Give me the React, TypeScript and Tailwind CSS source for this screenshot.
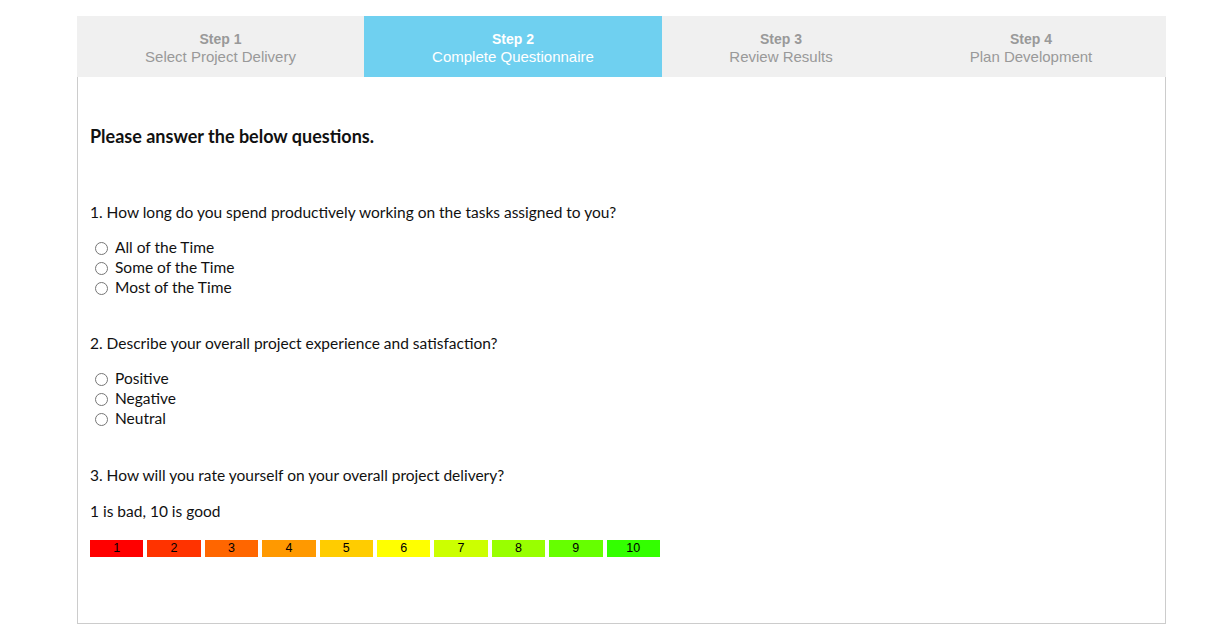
import React, { useState } from 'react';

// Wizard steps across the top
const steps = [
  { n: 1, label: 'Select Project Delivery', w: 'w-[287px]' },
  { n: 2, label: 'Complete Questionnaire', w: 'w-[298px]' },
  { n: 3, label: 'Review Results', w: 'w-[238px]' },
  { n: 4, label: 'Plan Development', w: 'w-[266px] pr-[4px]' },
];

const questions = [
  {
    q: '1. How long do you spend productively working on the tasks assigned to you?',
    options: ['All of the Time', 'Some of the Time', 'Most of the Time'],
  },
  {
    q: '2. Describe your overall project experience and satisfaction?',
    options: ['Positive', 'Negative', 'Neutral'],
  },
];

const ratings = [
  { v: 1, bg: 'bg-[#ff0000]' },
  { v: 2, bg: 'bg-[#ff3300]' },
  { v: 3, bg: 'bg-[#ff6600]' },
  { v: 4, bg: 'bg-[#ff9900]' },
  { v: 5, bg: 'bg-[#ffcc00]' },
  { v: 6, bg: 'bg-[#ffff00]' },
  { v: 7, bg: 'bg-[#ccff00]' },
  { v: 8, bg: 'bg-[#99ff00]' },
  { v: 9, bg: 'bg-[#66ff00]' },
  { v: 10, bg: 'bg-[#33ff00]' },
];

function Radio({ name, label }: { name: string; label: string }) {
  return (
    <label className="flex h-5 items-center">
      <span className="ml-[5px] mr-[7px] inline-block h-[13px] w-[13px] rounded-full border border-[#767676] bg-white" />
      <input type="radio" name={name} className="hidden" />
      <span>{label}</span>
    </label>
  );
}

export default function App() {
  const [active] = useState(2);

  return (
    <div className="h-[637px] overflow-hidden bg-white pt-4 font-['Lato','Liberation_Sans',sans-serif] text-[15.5px] text-[#111]">
      <div className="ml-[77px] w-[1089px]">
        {/* ── Step tabs ── */}
        <div className="flex h-[61px] bg-[#f0f0f0] font-['Liberation_Sans',Arial,sans-serif]">
          {steps.map((s) => (
            <div
              key={s.n}
              className={`${s.w} flex flex-col items-center justify-center pt-[2px] leading-[17px] ${
                s.n === active ? 'bg-[#6fd0f0] text-white' : 'text-[#999999]'
              }`}
            >
              <span className="text-[14px] font-bold">Step {s.n}</span>
              <span className="text-[15px]">{s.label}</span>
            </div>
          ))}
        </div>

        {/* ── Questionnaire body ── */}
        <div className="flex h-[547px] flex-col border border-t-0 border-[#cccccc] px-3 pt-[47px]">
          <h2 className="text-[18px] font-bold leading-6">Please answer the below questions.</h2>

          <div className="mt-[54px] flex flex-col gap-[35px]">
            {questions.map((item, i) => (
              <div key={i}>
                <p className="leading-5">{item.q}</p>
                <div className="mt-4">
                  {item.options.map((o) => (
                    <Radio key={o} name={`q${i}`} label={o} />
                  ))}
                </div>
              </div>
            ))}

            <div className="mt-px">
              <p className="leading-5">3. How will you rate yourself on your overall project delivery?</p>
              <p className="mt-4 leading-5">1 is bad, 10 is good</p>
              <div className="mt-[19px] flex gap-[4px] font-['Liberation_Sans',Arial,sans-serif]">
                {ratings.map((r) => (
                  <div
                    key={r.v}
                    className={`${r.bg} flex h-[17px] w-[53.4px] items-center justify-center text-[12.5px] text-black`}
                  >
                    {r.v}
                  </div>
                ))}
              </div>
            </div>
          </div>
        </div>
      </div>
    </div>
  );
}
